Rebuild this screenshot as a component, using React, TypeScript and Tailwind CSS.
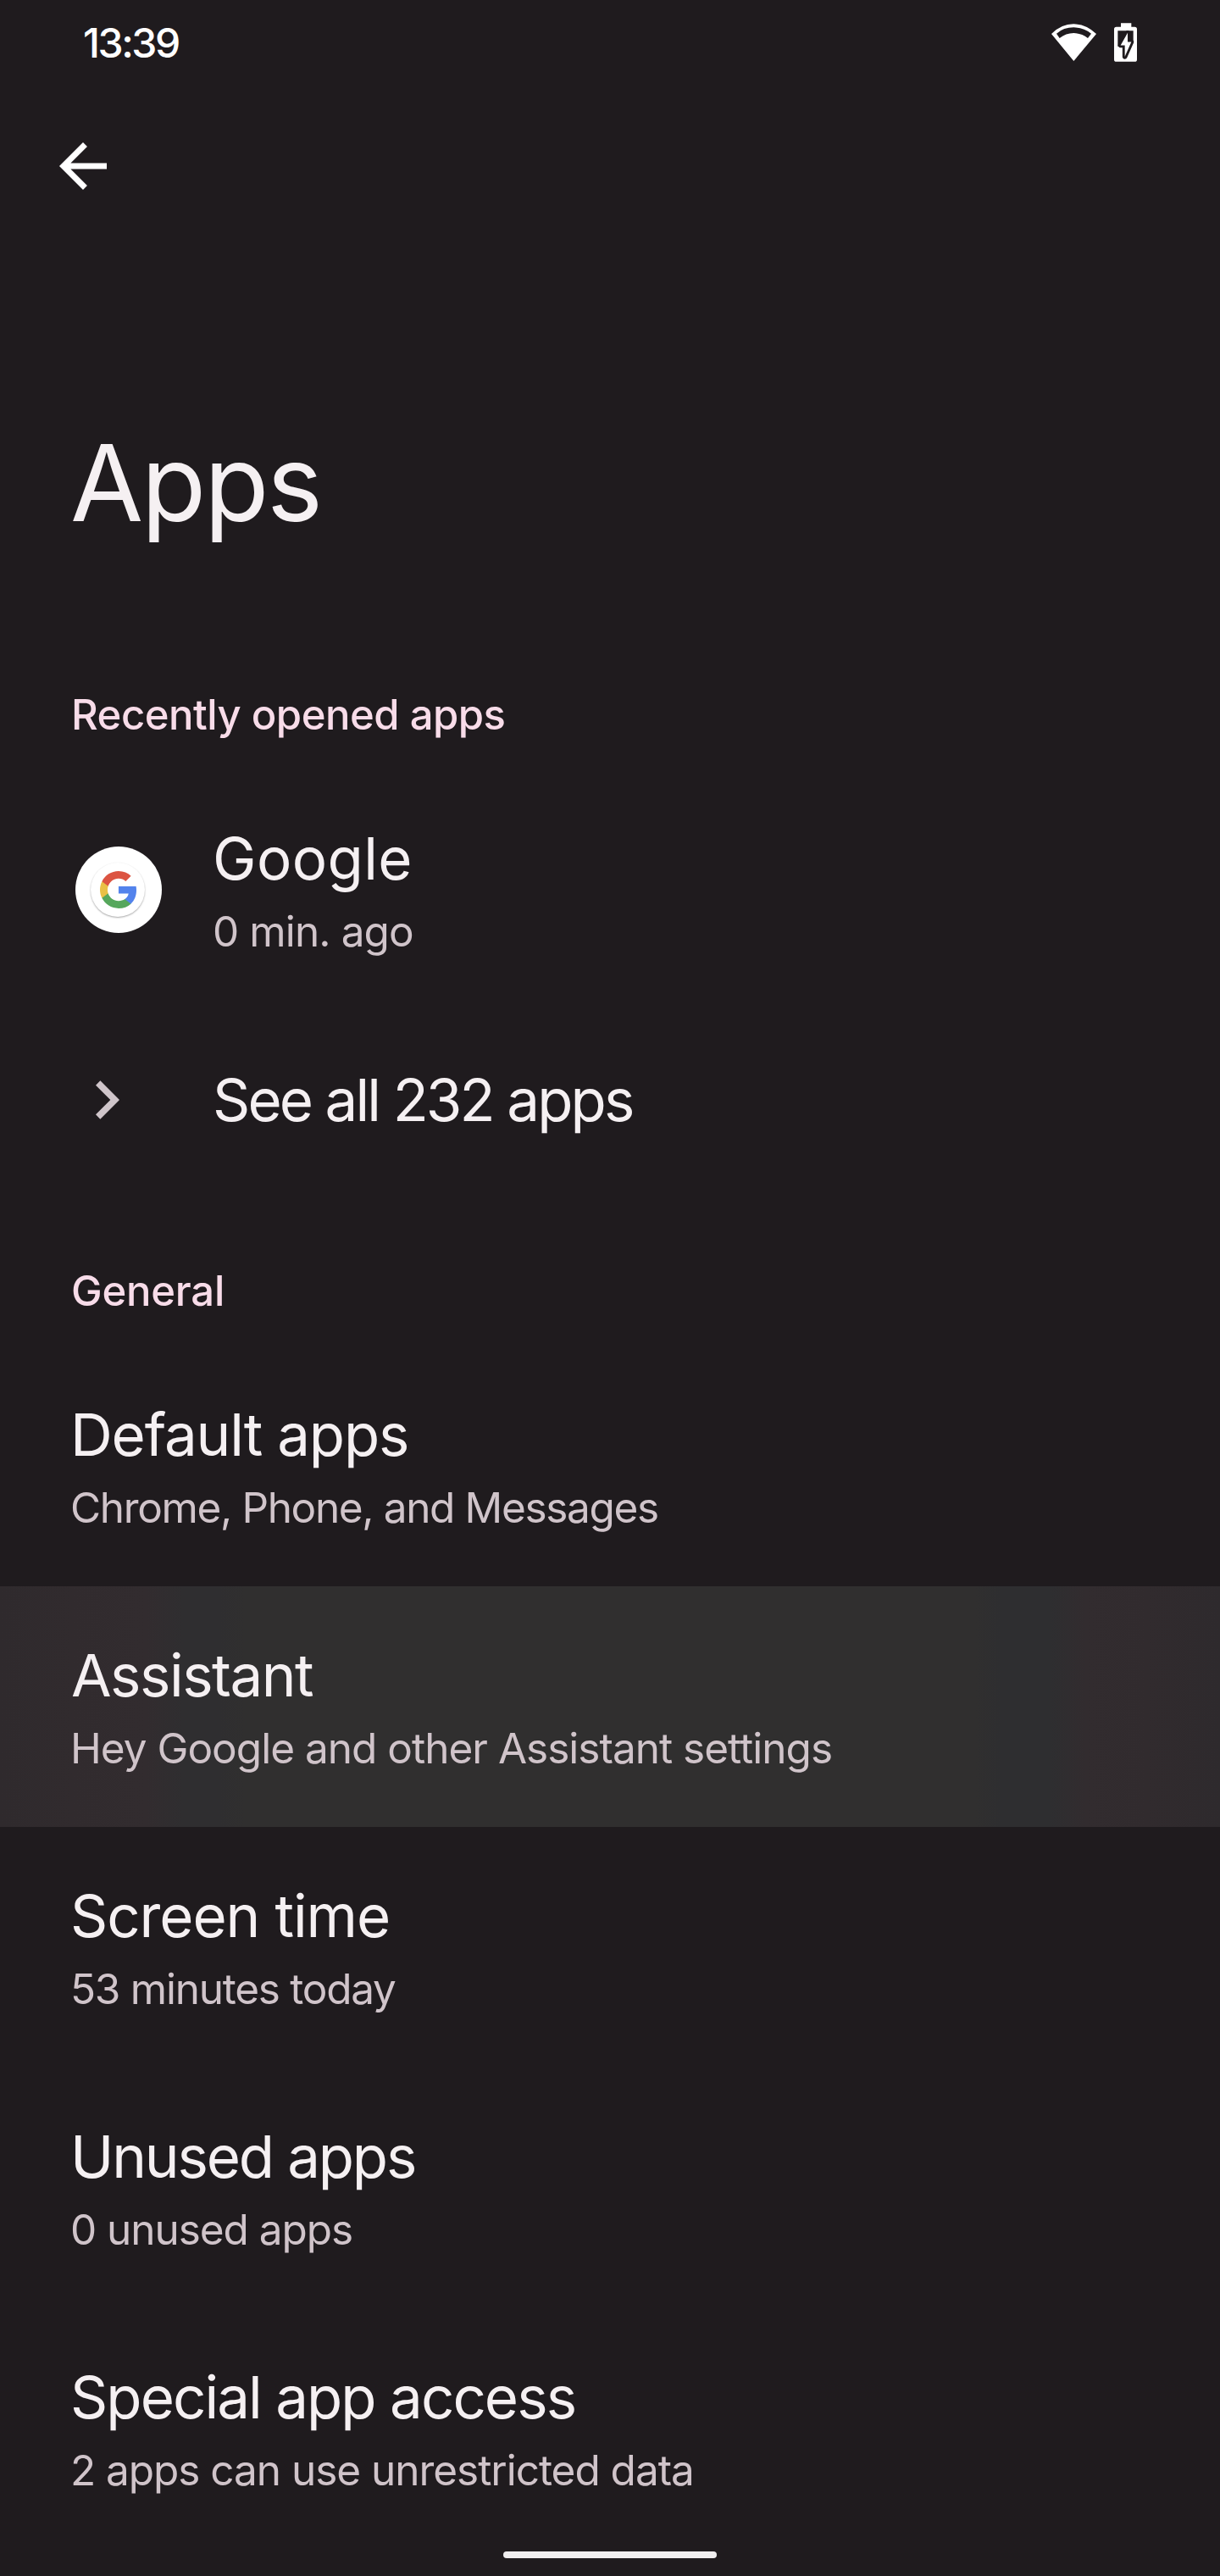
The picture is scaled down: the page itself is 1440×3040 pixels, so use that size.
import type { ReactNode } from "react";

type Item = {
  title: string;
  summary: string;
  titleClass: string;
  summaryClass: string;
  pressed?: boolean;
};

const GENERAL: Item[] = [
  {
    title: "Default apps",
    summary: "Chrome, Phone, and Messages",
    titleClass: "tracking-[-1.18px]",
    summaryClass: "tracking-[-1.36px]",
  },
  {
    title: "Assistant",
    summary: "Hey Google and other Assistant settings",
    titleClass: "pl-px tracking-[-1.5px]",
    summaryClass: "tracking-[-0.99px]",
    pressed: true,
  },
  {
    title: "Screen time",
    summary: "53 minutes today",
    titleClass: "tracking-[-1.09px]",
    summaryClass: "tracking-[-1.25px]",
  },
  {
    title: "Unused apps",
    summary: "0 unused apps",
    titleClass: "tracking-[-2.15px]",
    summaryClass: "tracking-[-1.05px]",
  },
  {
    title: "Special app access",
    summary: "2 apps can use unrestricted data",
    titleClass: "tracking-[-1.94px]",
    summaryClass: "tracking-[-1.03px]",
  },
];

const PRESSED_BG =
  "bg-[linear-gradient(90deg,#2f2a2d_0%,#312b2e_6%,#322c2f_12%,#2f2e30_15%,#2f2e30_18%,#302f2f_20%,#302f2f_80%,#2e2e30_82%,#2e2e30_86%,#322c2f_89%,#312b2e_94%,#2e2a2d_100%)]";

function WifiIcon() {
  return (
    <svg viewBox="15 26 159 132" className="h-[44px] w-[53px]" fill="#fff">
      <path
        fillRule="evenodd"
        d="M94 158 15 62Q50 27 94 27T174 62ZM33 61 44 77Q66 59 94 59T144 77L156 61Q130 39 94 39T33 61Z"
      />
    </svg>
  );
}

function BatteryIcon() {
  return (
    <svg viewBox="237 25 81 137" className="h-[46px] w-[27px]">
      <path
        fill="#fff"
        d="M237 47q0-8 8-8h16V25h37v14h12q8 0 8 8v107q0 8-8 8h-65q-8 0-8-8Z"
      />
      <path fill="#1f1b1e" d="M250 52h55v42l-8 14h-47Z" />
      <path
        fill="#fff"
        stroke="#1f1b1e"
        strokeWidth="17"
        strokeLinejoin="round"
        paintOrder="stroke"
        d="M285 60 260 104h15v40L298 92h-13Z"
      />
    </svg>
  );
}

function GoogleLogo() {
  return (
    <svg viewBox="1 1 21.56 22" className="h-[44px] w-[43px]">
      <path
        fill="#5383ec"
        d="M22.56 12.25c0-.78-.07-1.53-.2-2.25H12v4.26h5.92c-.26 1.37-1.04 2.53-2.21 3.31v2.77h3.57c2.08-1.92 3.28-4.74 3.28-8.09z"
      />
      <path
        fill="#56a75c"
        d="M12 23c2.97 0 5.46-.98 7.28-2.66l-3.57-2.77c-.98.66-2.23 1.06-3.71 1.06-2.86 0-5.29-1.93-6.16-4.53H2.18v2.84C3.99 20.53 7.7 23 12 23z"
      />
      <path
        fill="#e9c046"
        d="M5.84 14.09c-.22-.66-.35-1.36-.35-2.09s.13-1.43.35-2.09V7.07H2.18C1.43 8.55 1 10.22 1 12s.43 3.45 1.18 4.93l2.85-2.22.81-.62z"
      />
      <path
        fill="#dc5442"
        d="M12 5.38c1.62 0 3.06.56 4.21 1.64l3.15-3.15C17.45 2.09 14.97 1 12 1 7.7 1 3.99 3.47 2.18 7.07l3.66 2.84c.87-2.6 3.3-4.53 6.16-4.53z"
      />
    </svg>
  );
}

function SectionTitle({ className, children }: { className: string; children: ReactNode }) {
  return (
    <h2 className={`px-[84px] text-[49px] leading-[64px] font-medium text-[#f8dce9] ${className}`}>
      {children}
    </h2>
  );
}

function ItemText({ title, summary, titleClass, summaryClass }: Item) {
  return (
    <div>
      <p className={`text-[69px] leading-[84px] text-[#f5f0f2] ${titleClass}`}>{title}</p>
      <p className={`mt-3 text-[49.5px] leading-[64px] text-[#d0c4ca] ${summaryClass}`}>{summary}</p>
    </div>
  );
}

export default function App() {
  return (
    <div className="flex h-[3040px] w-[1440px] flex-col overflow-hidden bg-[#1f1b1e] font-['Inter',sans-serif] whitespace-nowrap">
      <div className="flex h-[100px] shrink-0 items-center justify-between px-[98px]">
        <span className="pt-0.5 text-[48px] leading-[60px] font-medium tracking-[-2.42px] text-white">13:39</span>
        <div className="flex items-center gap-[21px]">
          <WifiIcon />
          <BatteryIcon />
        </div>
      </div>

      <div className="flex h-[192px] shrink-0 items-center pl-[70px]">
        <svg viewBox="4 4 16 16" className="size-14" fill="#fff">
          <path d="M20 11H7.83l5.59-5.59L12 4l-8 8 8 8 1.41-1.41L7.83 13H20v-2z" />
        </svg>
      </div>

      <h1 className="mt-[203px] pl-[83px] text-[125px] leading-[150px] tracking-[-2.44px] text-[#f5f0f2]">Apps</h1>

      <SectionTitle className="pt-[167px] pb-8 tracking-[-0.48px]">Recently opened apps</SectionTitle>
      <div className="flex h-[284px] shrink-0 items-center gap-[60px] pl-[89px]">
        <div className="flex size-[102px] items-center justify-center rounded-full bg-white">
          <div className="mr-0.5 flex size-16 items-center justify-center rounded-full shadow-[0_1px_2px_rgba(0,0,0,0.35)]">
            <GoogleLogo />
          </div>
        </div>
        <div className="pt-0.5">
          <ItemText
            title="Google"
            summary="0 min. ago"
            titleClass="tracking-[0.4px]"
            summaryClass="tracking-[-0.9px]"
          />
        </div>
      </div>
      <div className="flex h-[212px] shrink-0 items-center gap-[60px] pl-[89px]">
        <div className="w-[102px] pl-6">
          <svg viewBox="8.59 6 7.41 12" className="h-[46px] w-[28px]" fill="#cfc5ca">
            <path d="M10 6 8.59 7.41 13.17 12l-4.58 4.59L10 18l6-6z" />
          </svg>
        </div>
        <p className="text-[69px] leading-[84px] tracking-[-2.88px] text-[#f5f0f2]">See all 232 apps</p>
      </div>

      <SectionTitle className="pt-[88px] pb-8 tracking-[-0.21px]">General</SectionTitle>
      {GENERAL.map((item) => (
        <div
          key={item.title}
          className={`h-[284px] shrink-0 pt-[63px] pl-[83px] ${item.pressed ? PRESSED_BG : ""}`}
        >
          <ItemText {...item} />
        </div>
      ))}

      <div className="mx-auto mt-[3px] h-2 w-[252px] shrink-0 rounded-full bg-[#f0eeef]" />
    </div>
  );
}
